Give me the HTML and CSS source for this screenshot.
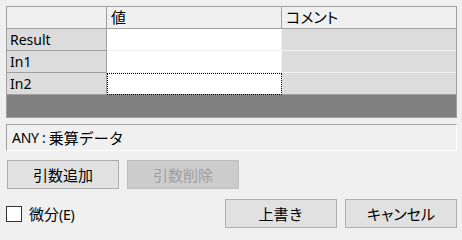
FILE: index.html
```html
<!DOCTYPE html>
<html lang="ja">
<head>
<meta charset="utf-8">
<link rel="stylesheet" href="styles.css">
</head>
<body>
<div class="dialog">
  <div class="grid">
    <div class="cell hd corner"></div>
    <div class="cell hd">値</div>
    <div class="cell hd last kana">コメント</div>

    <div class="cell rh">Result</div>
    <div class="cell val"></div>
    <div class="cell cmt"></div>

    <div class="cell rh">In1</div>
    <div class="cell val"></div>
    <div class="cell cmt"></div>

    <div class="cell rh">In2</div>
    <div class="cell val focus"></div>
    <div class="cell cmt"></div>

    <div class="empty"></div>
  </div>

  <div class="desc"><span class="lat">ANY : </span>乗算データ</div>

  <div class="btnrow">
    <button class="btn">引数追加</button>
    <button class="btn disabled">引数削除</button>
  </div>

  <div class="footer">
    <label class="check"><span class="box"></span><span class="lbl">微分<span class="lat">(E)</span></span></label>
    <div class="actions">
      <button class="btn">上書き</button>
      <button class="btn kana">キャンセル</button>
    </div>
  </div>
</div>
</body>
</html>
```

FILE: styles.css
```css
html, body {
  margin: 0;
  padding: 0;
  background: #f0f0f0;
}
body {
  font-family: "Noto Sans", "Noto Sans CJK JP", sans-serif;
  font-size: 15px;
  color: #000;
}
.lat {
  font-size: 14px;
  letter-spacing: -0.3px;
}
.kana {
  font-feature-settings: "palt";
}
.dialog {
  padding: 6px 5px 0 6px;
}
.grid {
  width: 449px;
  border: 1px solid #a0a0a0;
  display: grid;
  grid-template-columns: 100px 175px 174px;
  grid-template-rows: 22px 22px 22px 22px 22px;
}
.cell {
  box-sizing: border-box;
  display: flex;
  align-items: center;
  line-height: 1;
  white-space: nowrap;
}
.hd {
  background: #f0f0f0;
  border-bottom: 1px solid #a0a0a0;
  border-right: 1px solid #a0a0a0;
  padding-left: 4px;
}
.hd.last {
  border-right: none;
}
.rh {
  background: #dcdcdc;
  border-bottom: 1px solid #a0a0a0;
  border-right: 1px solid #a0a0a0;
  padding-left: 3px;
  font-size: 14px;
}
.val {
  background: #fff;
  border-bottom: 1px solid #f0f0f0;
  border-right: 1px solid #f0f0f0;
}
.cmt {
  background: #dcdcdc;
  border-bottom: 1px solid #f0f0f0;
}
.val.focus {
  border-bottom-color: #a0a0a0;
  outline: 1px dotted #000;
  outline-offset: -1px;
}
.grid .cell:nth-child(12) { border-bottom-color: #a0a0a0; }
.empty {
  grid-column: 1 / 4;
  background: #808080;
}
.desc {
  margin-top: 6px;
  width: 451px;
  height: 27px;
  box-sizing: border-box;
  border-top: 1px solid #a0a0a0;
  border-left: 1px solid #a0a0a0;
  border-right: 1px solid #fff;
  border-bottom: 1px solid #fff;
  display: flex;
  align-items: center;
  padding-left: 5px;
  white-space: pre;
}
.btnrow {
  margin-top: 9px;
  margin-left: 1px;
  display: flex;
  gap: 8px;
}
.btn {
  width: 112px;
  height: 29px;
  box-sizing: border-box;
  background: #e1e1e1;
  border: 1px solid #adadad;
  font: inherit;
  color: #000;
  padding: 0;
  margin: 0;
}
.btn.kana {
  font-feature-settings: "palt";
}
.btn.disabled {
  background: #cccccc;
  border-color: #bfbfbf;
  color: #a0a0a0;
}
.footer {
  margin-top: 10px;
  width: 451px;
  display: flex;
  align-items: center;
  justify-content: space-between;
}
.check {
  display: flex;
  align-items: center;
  gap: 7px;
}
.box {
  width: 16px;
  height: 16px;
  box-sizing: border-box;
  border: 1px solid #333;
  background: #fff;
}
.actions {
  display: flex;
  gap: 8px;
}
```
